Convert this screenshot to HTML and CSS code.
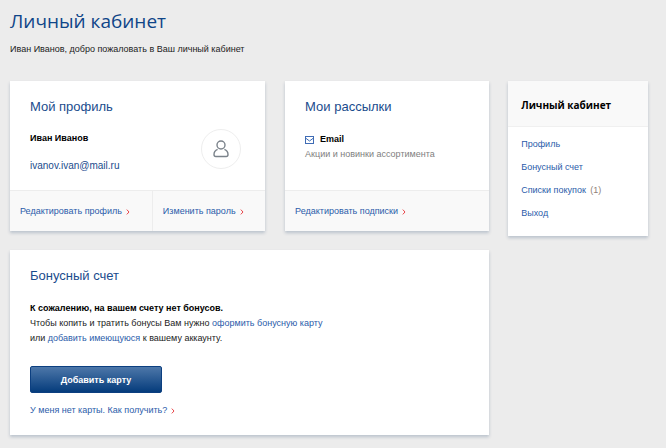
FILE: index.html
```html
<!DOCTYPE html>
<html lang="ru">
<head>
    <meta charset="UTF-8">
    <meta name="viewport" content="width=device-width, initial-scale=1.0">
    <title>Личный кабинет</title>
    <link rel="stylesheet" href="styles.css">
</head>
<body>
    <header class="page-header">
        <h1>Личный кабинет</h1>
        <p>Иван Иванов, добро пожаловать в Ваш личный кабинет</p>
    </header>

    <div class="layout">
        <main class="cards">
            <section class="card">
                <div class="card-body">
                    <h2>Мой профиль</h2>
                    <div class="profile">
                        <div class="profile-info">
                            <strong>Иван Иванов</strong>
                            <a class="email" href="mailto:ivanov.ivan@mail.ru">ivanov.ivan@mail.ru</a>
                        </div>
                        <div class="avatar">
                            <svg width="16" height="18" viewBox="0 0 16 18" fill="none" stroke="#7b838b" stroke-width="1.4">
                                <circle cx="8" cy="5" r="4"/>
                                <path d="M4.6 9.4C2.2 10.2 1 12 1 14.6c0 1.3.6 1.9 1.8 1.9h10.4c1.2 0 1.8-.6 1.8-1.9 0-2.6-1.2-4.4-3.6-5.2"/>
                            </svg>
                        </div>
                    </div>
                </div>
                <div class="card-footer split">
                    <a class="more" href="#">Редактировать профиль<svg class="arrow" width="4" height="6" viewBox="0 0 4 6"><path d="M.8.6 3 3 .8 5.4"/></svg></a>
                    <a class="more" href="#">Изменить пароль<svg class="arrow" width="4" height="6" viewBox="0 0 4 6"><path d="M.8.6 3 3 .8 5.4"/></svg></a>
                </div>
            </section>

            <section class="card">
                <div class="card-body">
                    <h2>Мои рассылки</h2>
                    <div class="channel">
                        <svg width="9" height="8" viewBox="0 0 9 8" fill="none" stroke="#3f6cb5">
                            <rect x=".5" y=".5" width="8" height="7"/>
                            <path d="M.5 2 4.5 5 8.5 2"/>
                        </svg>
                        <strong>Email</strong>
                    </div>
                    <p class="muted">Акции и новинки ассортимента</p>
                </div>
                <div class="card-footer">
                    <a class="more" href="#">Редактировать подписки<svg class="arrow" width="4" height="6" viewBox="0 0 4 6"><path d="M.8.6 3 3 .8 5.4"/></svg></a>
                </div>
            </section>

            <section class="card wide">
                <div class="card-body">
                    <h2>Бонусный счет</h2>
                    <p class="bonus-text">
                        <strong>К сожалению, на вашем счету нет бонусов.</strong><br>
                        Чтобы копить и тратить бонусы Вам нужно <a href="#">оформить бонусную карту</a><br>
                        или <a href="#">добавить имеющуюся</a> к вашему аккаунту.
                    </p>
                    <button class="btn" type="button">Добавить карту</button>
                    <a class="more" href="#">У меня нет карты. Как получить?<svg class="arrow" width="4" height="6" viewBox="0 0 4 6"><path d="M.8.6 3 3 .8 5.4"/></svg></a>
                </div>
            </section>
        </main>

        <aside class="card sidebar">
            <h3>Личный кабинет</h3>
            <nav class="menu">
                <a href="#">Профиль</a>
                <a href="#">Бонусный счет</a>
                <a href="#">Списки покупок <span class="count">(1)</span></a>
                <a href="#">Выход</a>
            </nav>
        </aside>
    </div>
</body>
</html>
```

FILE: styles.css
```css
* {
    box-sizing: border-box;
}
body {
    margin: 0;
    padding: 8px 18px 13px 10px;
    background: #ececec;
    color: #222;
    font-family: "Liberation Sans", Arial, sans-serif;
    font-size: 9px;
    line-height: 15px;
}
h1, h2, h3, p {
    margin: 0;
}
a {
    color: #2b5caa;
    text-decoration: none;
}
strong {
    color: #000;
}
h1 {
    color: #0f4588;
    font-family: "Open Sans", "Noto Sans", sans-serif;
    font-size: 19px;
    font-weight: 400;
    line-height: 26px;
}
h2 {
    color: #1a4c8d;
    font-size: 13px;
    font-weight: 400;
    line-height: 20px;
}
.page-header p {
    margin-top: 8px;
}
.layout {
    display: grid;
    grid-template-columns: 24fr 7fr;
    align-items: start;
    gap: 19px;
    margin-top: 24px;
}
.cards {
    display: grid;
    grid-template-columns: 5fr 4fr;
    gap: 19px 20px;
}
.card {
    display: flex;
    flex-direction: column;
    background: #fff;
    box-shadow: 0 2px 3px rgba(40, 70, 110, 0.25);
}
.wide {
    grid-column: 1 / -1;
}
.card-body {
    flex: 1;
    padding: 16px 20px 17px;
}
.profile {
    display: flex;
    justify-content: space-between;
    margin-top: 12px;
}
.profile-info {
    display: flex;
    flex-direction: column;
    gap: 12px;
    padding-top: 2px;
}
.email {
    color: #1a4c8d;
    font-size: 10px;
}
.avatar {
    display: flex;
    align-items: center;
    justify-content: center;
    width: 40px;
    height: 40px;
    margin-right: 4px;
    border: 1px solid #eee;
    border-radius: 50%;
}
.channel {
    display: flex;
    align-items: center;
    gap: 6px;
    margin-top: 15px;
}
.muted {
    color: #808080;
}
.card-footer {
    display: flex;
    background: #f9f9f9;
    border-top: 1px solid #ededed;
}
.card-footer .more {
    padding: 13px 10px 12px;
}
.split .more:first-child {
    width: 56%;
    border-right: 1px solid #ededed;
}
.arrow {
    margin-left: 4px;
    fill: none;
    stroke: #e8464a;
    vertical-align: -1px;
}
.bonus-text {
    margin-top: 15px;
}
.btn {
    display: block;
    width: 132px;
    height: 27px;
    margin: 20px 0 10px;
    border: 1px solid #0c3f80;
    border-radius: 2px;
    background: linear-gradient(#4d77a9, #053c7c);
    color: #fff;
    font-family: inherit;
    font-size: 9px;
    font-weight: 700;
}
.sidebar h3 {
    padding: 17px 13px 13px;
    background: #f9f9f9;
    border-bottom: 1px solid #f0f0f0;
    color: #000;
    font-family: "Open Sans", "Noto Sans", sans-serif;
    font-size: 10px;
    font-weight: 700;
}
.menu {
    display: flex;
    flex-direction: column;
    gap: 8px;
    padding: 10px 13px 15px;
}
.count {
    margin-left: 2px;
    color: #907f78;
}
```
